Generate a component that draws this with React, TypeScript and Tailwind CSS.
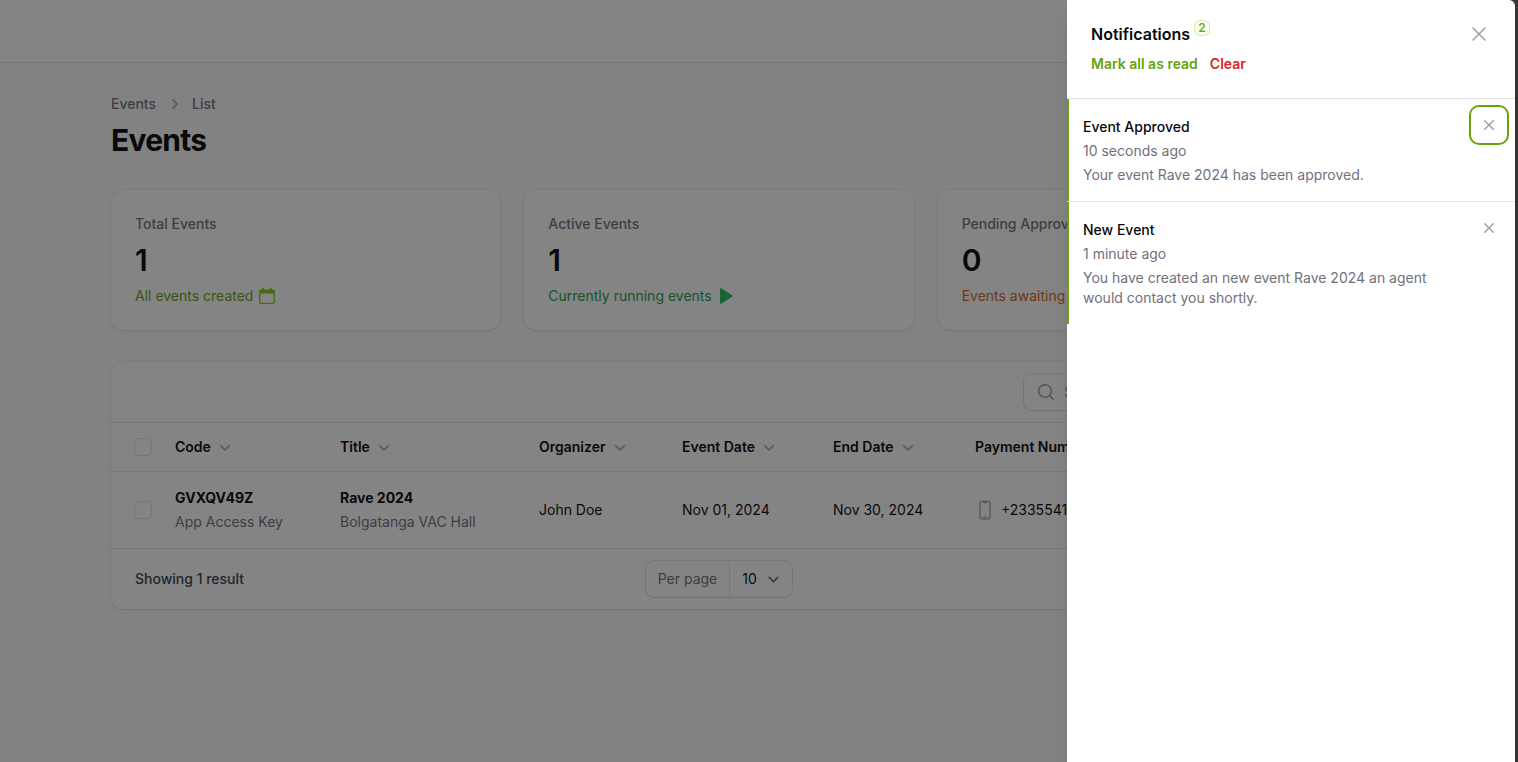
import { HiMiniChevronDown, HiMiniChevronRight, HiMiniXMark, HiOutlineXMark, HiMiniMagnifyingGlass, HiOutlineDevicePhoneMobile } from "react-icons/hi2";
import type { ReactNode } from "react";

function CalendarIcon() {
  return (
    <svg viewBox="0 0 20 20" className="size-5 text-[#84cc16]" fill="currentColor" aria-hidden="true">
      <path d="M5.2 2h1.6v1.6h6.4V2h1.6v1.6H16a2 2 0 0 1 2 2V16a2 2 0 0 1-2 2H4a2 2 0 0 1-2-2V5.600a2 2 0 0 1 2-2h1.200zM3.400 7.400V16c0 .4.3.7.7.7h11.800c.4 0 .7-.3.7-.7V7.400z" fillRule="evenodd" />
    </svg>
  );
}

function PlayIcon() {
  return (
    <svg viewBox="0 0 20 20" className="size-5 text-[#22c55e]" fill="currentColor" aria-hidden="true">
      <path d="M4 3.200c0-.9.900-1.300 1.600-.8l10.600 6.900c.5.300.5 1.100 0 1.400L5.600 17.600c-.7.500-1.600.1-1.600-.8z" />
    </svg>
  );
}

type Stat = { label: string; value: string; note: string; tone: string; icon?: ReactNode };

const stats: Stat[] = [
  { label: "Total Events", value: "1", note: "All events created", tone: "text-[#65a30d]", icon: <CalendarIcon /> },
  { label: "Active Events", value: "1", note: "Currently running events", tone: "text-[#16a34a]", icon: <PlayIcon /> },
  { label: "Pending Approval", value: "0", note: "Events awaiting approval", tone: "text-[#d96510]" },
];

const columns = ["Code", "Title", "Organizer", "Event Date", "End Date", "Payment Number"];

const notifications = [
  { title: "Event Approved", time: "10 seconds ago", body: "Your event Rave 2024 has been approved.", focused: true },
  {
    title: "New Event",
    time: "1 minute ago",
    body: "You have created an new event Rave 2024 an agent would contact you shortly.",
    focused: false,
  },
];

function StatCard({ stat }: { stat: Stat }) {
  return (
    <section className="flex flex-col gap-2 rounded-xl bg-white p-6 shadow-xs ring-1 ring-zinc-950/5">
      <h2 className="text-sm font-medium text-zinc-500">{stat.label}</h2>
      <p className="text-3xl font-semibold tracking-tight text-zinc-950">{stat.value}</p>
      <p className={`flex items-center gap-1 text-sm whitespace-nowrap ${stat.tone}`}>
        {stat.note}
        {stat.icon}
      </p>
    </section>
  );
}

function Checkbox({ label }: { label: string }) {
  return (
    <input
      type="checkbox"
      aria-label={label}
      className="block size-4 appearance-none rounded-sm bg-white shadow-xs ring-1 ring-zinc-950/10"
    />
  );
}

function EventsTable() {
  return (
    <section className="overflow-hidden rounded-xl bg-white shadow-xs ring-1 ring-zinc-950/5">
      <div className="flex justify-end px-6 py-3">
        <label className="flex h-9 w-[279px] items-center gap-2 rounded-lg bg-white px-3 shadow-xs ring-1 ring-zinc-950/10">
          <HiMiniMagnifyingGlass className="size-5 shrink-0 text-zinc-400" aria-hidden="true" />
          <input type="search" aria-label="Search" placeholder="Search" className="w-full min-w-0 text-sm outline-none placeholder:text-zinc-400" />
        </label>
      </div>
      <table className="w-full table-fixed border-separate border-spacing-0 text-left text-sm">
        <colgroup>
          <col className="w-[52px]" />
          <col className="w-[165px]" />
          <col className="w-[199px]" />
          <col className="w-[143px]" />
          <col className="w-[151px]" />
          <col className="w-[142px]" />
          <col />
        </colgroup>
        <thead>
          <tr>
            <th className="border-t border-zinc-200 py-3.5 pl-6">
              <Checkbox label="Select all events" />
            </th>
            {columns.map((name) => (
              <th key={name} className="border-t border-zinc-200 px-3 py-3.5 font-semibold text-zinc-950">
                <button type="button" className="flex items-center gap-1 whitespace-nowrap">
                  {name}
                  <HiMiniChevronDown className="size-5 text-zinc-400" aria-hidden="true" />
                </button>
              </th>
            ))}
          </tr>
        </thead>
        <tbody className="text-zinc-950">
          <tr>
            <td className="border-y border-zinc-200 py-4 pl-6">
              <Checkbox label="Select Rave 2024" />
            </td>
            <td className="border-y border-zinc-200 px-3 py-4">
              <p className="font-bold">GVXQV49Z</p>
              <p className="mt-1 text-zinc-500">App Access Key</p>
            </td>
            <td className="border-y border-zinc-200 px-3 py-4">
              <p className="font-bold">Rave 2024</p>
              <p className="mt-1 text-zinc-500">Bolgatanga VAC Hall</p>
            </td>
            <td className="border-y border-zinc-200 px-3 py-4">John Doe</td>
            <td className="border-y border-zinc-200 px-3 py-4">Nov 01, 2024</td>
            <td className="border-y border-zinc-200 px-3 py-4">Nov 30, 2024</td>
            <td className="border-y border-zinc-200 px-3 py-4">
              <span className="flex items-center gap-1.5">
                <HiOutlineDevicePhoneMobile className="size-5 text-zinc-400" aria-hidden="true" />
                +2335541
              </span>
            </td>
          </tr>
        </tbody>
      </table>
      <footer className="grid grid-cols-[1fr_auto_1fr] items-center px-6 py-3">
        <span className="text-sm font-medium text-zinc-700">Showing 1 result</span>
        <label className="flex h-9 items-center rounded-lg bg-white text-sm shadow-xs ring-1 ring-zinc-950/10">
          <span className="flex h-full items-center border-r border-zinc-200 px-3 text-zinc-500">Per page</span>
          <span className="relative flex h-full items-center">
            <select className="h-full w-[62px] appearance-none bg-transparent pr-8 pl-3 text-zinc-950 outline-none">
              <option>10</option>
            </select>
            <svg viewBox="0 0 20 20" className="pointer-events-none absolute right-2 size-[21px] text-gray-500" fill="none" stroke="currentColor" strokeWidth="1.8" strokeLinecap="round" strokeLinejoin="round" aria-hidden="true">
              <path d="M6 8l4 4 4-4" />
            </svg>
          </span>
        </label>
      </footer>
    </section>
  );
}

function NotificationsPanel() {
  return (
    <aside role="dialog" aria-label="Notifications" className="flex h-full w-full max-w-md flex-col overflow-y-auto rounded-tr-md bg-white shadow-xl">
      <header className="flex items-start justify-between px-6 pt-5.5 pb-6">
        <div>
          <h2 className="flex items-start gap-1 text-base font-semibold text-zinc-950">
            Notifications
            <span className="-mt-0.5 flex size-4 items-center justify-center rounded-md bg-[#f7fee7] text-xs font-medium text-[#65a30d] ring-1 ring-[#65a30d]/20 ring-inset">
              2
            </span>
          </h2>
          <div className="mt-2 flex gap-3 text-sm font-semibold">
            <button type="button" className="text-[#65a30d]">Mark all as read</button>
            <button type="button" className="text-[#dc2626]">Clear</button>
          </div>
        </div>
        <button type="button" aria-label="Close" className="text-zinc-400">
          <HiOutlineXMark className="size-6" />
        </button>
      </header>
      <ul>
        {notifications.map((item) => (
          <li key={item.title} className="border-t border-zinc-200">
            <div className="flex items-start gap-3 border-l-2 border-[#65a30d] py-4 pr-4 pl-3.5 text-sm">
              <div className="flex flex-1 flex-col gap-1 pt-0.5 text-zinc-500">
                <h3 className="font-medium text-zinc-950">{item.title}</h3>
                <p>{item.time}</p>
                <p>{item.body}</p>
              </div>
              <button
                type="button"
                aria-label={`Dismiss ${item.title}`}
                className={`-m-2 rounded-lg p-2 text-zinc-400 ${item.focused ? "ring-2 ring-[#65a30d]" : ""}`}
              >
                <HiMiniXMark className="size-5" />
              </button>
            </div>
          </li>
        ))}
      </ul>
    </aside>
  );
}

export default function App() {
  return (
    <div className="h-screen overflow-hidden bg-zinc-50 font-[Inter,sans-serif] text-zinc-950">
      <nav aria-label="Top bar" className="h-[63px] border-b border-zinc-200 bg-white" />
      <div className="pr-20">
        <main className="mx-auto flex max-w-7xl flex-col gap-8 px-8 pt-[31px] pb-8">
          <header>
            <nav aria-label="Breadcrumb" className="flex items-center gap-2 text-sm font-medium text-zinc-500">
              <a href="#events">Events</a>
              <HiMiniChevronRight className="size-5 text-zinc-400" aria-hidden="true" />
              <a href="#list">List</a>
            </nav>
            <h1 className="mt-2 text-3xl font-bold tracking-tight">Events</h1>
          </header>
          <div className="grid grid-cols-3 gap-6">
            {stats.map((stat) => (
              <StatCard key={stat.label} stat={stat} />
            ))}
          </div>
          <EventsTable />
        </main>
      </div>
      <div className="fixed inset-0 flex justify-end bg-zinc-950/50">
        <div className="flex w-[451px] max-w-full bg-[#363636] pr-[3px]">
          <NotificationsPanel />
        </div>
      </div>
    </div>
  );
}
